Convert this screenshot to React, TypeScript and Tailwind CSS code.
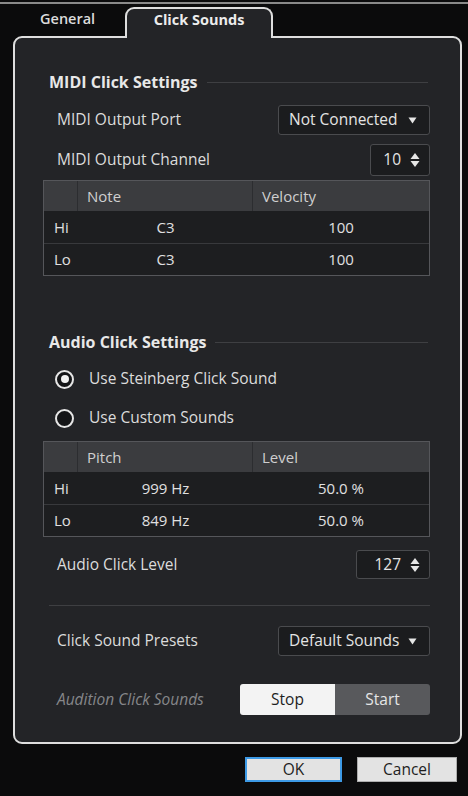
import React from "react";

const FONT = { fontFamily: '"Open Sans", "Noto Sans", Arial, sans-serif' };

function Caret() {
  return (
    <svg width="9" height="7" viewBox="0 0 9 7" className="shrink-0">
      <path d="M0.5 0.5 H8.5 L4.5 6.5 Z" fill="#e6e6e6" />
    </svg>
  );
}

function Stepper() {
  return (
    <svg width="10" height="16" viewBox="0 0 10 16" className="shrink-0">
      <path d="M5 1 L9.5 7 H0.5 Z" fill="#e6e6e6" />
      <path d="M0.5 9 H9.5 L5 15 Z" fill="#e6e6e6" />
    </svg>
  );
}

function Dropdown({ value }: { value: string }) {
  return (
    <div className="w-[152px] h-full flex items-center justify-between pl-[10px] pr-[12px] bg-[#1b1c1e] border border-[#4a4b4e] rounded-[3px] text-[15.5px] text-[#e4e4e4]">
      <span>{value}</span>
      <Caret />
    </div>
  );
}

function Spin({ value, w }: { value: string; w: string }) {
  return (
    <div
      className={`${w} h-full flex items-center justify-end gap-[9px] pr-[9px] bg-[#1b1c1e] border border-[#4a4b4e] rounded-[3px] text-[15.5px] text-[#e4e4e4]`}
    >
      <span>{value}</span>
      <Stepper />
    </div>
  );
}

function SectionTitle({ title }: { title: string }) {
  return (
    <div className="h-[20px] ml-[6px] flex items-center gap-[9px]">
      <span className="font-bold text-[16px] text-[#e8e8e8] whitespace-nowrap">{title}</span>
      <div className="flex-1 h-px bg-[#3e3f42] mr-[2px]" />
    </div>
  );
}

function Radio({ on, label }: { on: boolean; label: string }) {
  return (
    <div className="h-[24px] ml-[12px] flex items-center gap-[15px]">
      <div className="w-[19px] h-[19px] rounded-full border-2 border-[#e6e6e6] bg-[#141517] flex items-center justify-center">
        {on && <div className="w-[8px] h-[8px] rounded-full bg-[#f2f2f2]" />}
      </div>
      <span className="text-[15.5px] text-[#dcdcdc]">{label}</span>
    </div>
  );
}

function Table({ cols, rows }: { cols: [string, string]; rows: [string, string, string][] }) {
  return (
    <div className="border border-[#55565a] bg-[#1d1e20] text-[15px]">
      <div className="h-[30px] flex bg-[#3b3c3f] text-[#cfcfcf]">
        <div className="w-[34px] border-r border-[#2c2d30]" />
        <div className="w-[175px] pl-[9px] flex items-center border-r border-[#2c2d30]">{cols[0]}</div>
        <div className="flex-1 pl-[9px] flex items-center">{cols[1]}</div>
      </div>
      {rows.map((r, i) => (
        <div
          key={r[0]}
          className={`h-[32px] flex items-center text-[#e0e0e0] ${i > 0 ? "border-t border-[#38393c]" : ""}`}
        >
          <div className="w-[34px] pl-[10px]">{r[0]}</div>
          <div className="w-[175px] text-center">{r[1]}</div>
          <div className="flex-1 text-center">{r[2]}</div>
        </div>
      ))}
    </div>
  );
}

export default function App() {
  return (
    <div style={FONT} className="w-[468px] h-[796px] bg-[#0b0b0c] flex flex-col overflow-hidden">
      <div className="mt-[2px] h-[2px] bg-[#8a8a8a]" />
      {/* tabs */}
      <div className="h-[32px] flex items-end pl-[40px]">
        <div className="w-[85px] h-[29px] flex items-start pt-[1px] text-[14.5px] font-semibold text-[#dcdcdc]">
          General
        </div>
        <div className="relative z-10 w-[148px] h-[31px] -mb-[2px] bg-[#232427] border-2 border-b-0 border-[#dedede] rounded-t-[9px] flex items-start justify-center text-[14.5px] font-bold text-[#ececec]">
          Click Sounds
        </div>
      </div>

      {/* panel */}
      <div className="ml-[13px] mr-[6px] bg-[#232427] border-2 border-[#dedede] rounded-[9px] pl-[28px] pr-[30px] pb-[27px] flex flex-col">
        <div className="mt-[34px]">
          <SectionTitle title="MIDI Click Settings" />
        </div>

        <div className="mt-[13px] h-[30px] flex items-center justify-between">
          <span className="ml-[14px] text-[15.5px] text-[#dcdcdc]">MIDI Output Port</span>
          <Dropdown value="Not Connected" />
        </div>

        <div className="mt-[9px] h-[32px] flex items-center justify-between">
          <span className="ml-[14px] text-[15.5px] text-[#dcdcdc]">MIDI Output Channel</span>
          <Spin value="10" w="w-[60px]" />
        </div>

        <div className="mt-[4px]">
          <Table
            cols={["Note", "Velocity"]}
            rows={[
              ["Hi", "C3", "100"],
              ["Lo", "C3", "100"],
            ]}
          />
        </div>

        <div className="mt-[56px]">
          <SectionTitle title="Audio Click Settings" />
        </div>

        <div className="mt-[15px]">
          <Radio on label="Use Steinberg Click Sound" />
        </div>
        <div className="mt-[15px]">
          <Radio on={false} label="Use Custom Sounds" />
        </div>

        <div className="mt-[11px]">
          <Table
            cols={["Pitch", "Level"]}
            rows={[
              ["Hi", "999 Hz", "50.0 %"],
              ["Lo", "849 Hz", "50.0 %"],
            ]}
          />
        </div>

        <div className="mt-[13px] h-[29px] flex items-center justify-between">
          <span className="ml-[14px] text-[15.5px] text-[#dcdcdc]">Audio Click Level</span>
          <Spin value="127" w="w-[74px]" />
        </div>

        <div className="mt-[26px] ml-[6px] h-px bg-[#3e3f42]" />

        <div className="mt-[20px] h-[30px] flex items-center justify-between">
          <span className="ml-[14px] text-[15.5px] text-[#dcdcdc]">Click Sound Presets</span>
          <Dropdown value="Default Sounds" />
        </div>

        <div className="mt-[28px] h-[31px] flex items-center justify-between">
          <span className="ml-[14px] text-[15.5px] italic text-[#86878a]">Audition Click Sounds</span>
          <div className="w-[190px] h-full flex rounded-[3px] overflow-hidden text-[15.5px]">
            <div className="flex-1 bg-[#f3f3f3] text-[#1e1e1e] flex items-center justify-center">Stop</div>
            <div className="flex-1 bg-[#58595c] text-[#e6e6e6] flex items-center justify-center">Start</div>
          </div>
        </div>
      </div>

      {/* dialog buttons */}
      <div className="mt-[13px] flex justify-end gap-[15px] pr-[11px]">
        <button className="w-[97px] h-[25px] bg-[#e3e3e3] border-2 border-[#3d9ae6] text-[15.5px] text-[#1e1e1e] flex items-center justify-center">
          OK
        </button>
        <button className="w-[100px] h-[25px] bg-[#e3e3e3] border border-[#adadad] text-[15.5px] text-[#1e1e1e] flex items-center justify-center">
          Cancel
        </button>
      </div>
    </div>
  );
}
